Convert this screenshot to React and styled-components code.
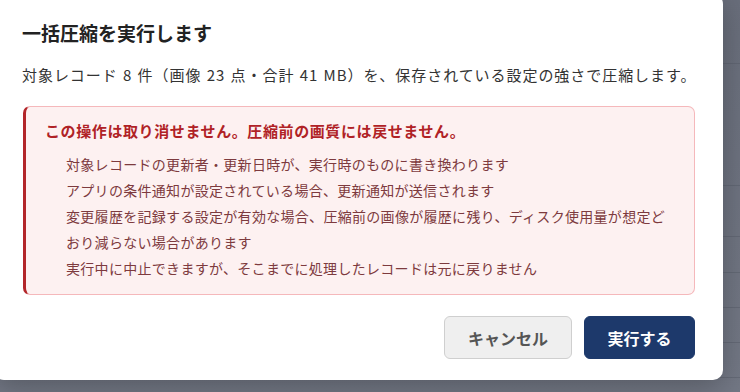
import styled, { createGlobalStyle } from "styled-components";

const GlobalStyle = createGlobalStyle`
  html, body {
    margin: 0;
    padding: 0;
    background: #6c717e;
  }
  body {
    font-family: "Noto Sans CJK JP", "Noto Sans", sans-serif;
  }
`;

const Page = styled.div`
  position: relative;
  width: 740px;
  height: 392px;
  overflow: hidden;
  background: linear-gradient(180deg, #696e7b 0%, #6e7380 50%, #737885 100%);
`;

const Backdrop = styled.div`
  display: flex;
  flex-direction: column;
`;

const BackRow = styled.div`
  height: ${({ h }) => h}px;
  border-bottom: 1px solid rgba(90, 95, 108, 0.55);
  flex-shrink: 0;
`;

const Dialog = styled.div`
  position: absolute;
  left: -6px;
  top: -6px;
  width: 729px;
  box-sizing: border-box;
  padding: 26px 28px 21px 28px;
  background: #ffffff;
  border-radius: 10px;
  box-shadow: 0 8px 30px rgba(0, 0, 0, 0.25);
`;

const Title = styled.h2`
  margin: 0;
  font-size: 19px;
  line-height: 26px;
  font-weight: 700;
  color: #222;
`;

const Description = styled.p`
  margin: 17px 0 0 0;
  font-size: 15px;
  line-height: 24px;
  letter-spacing: 0.95px;
  word-spacing: 1px;
  color: #333;
  white-space: nowrap;
`;

const Alert = styled.div`
  margin-top: 19px;
  margin-left: 1px;
  padding: 12px 16px 13px 19px;
  background: #fdf1f1;
  border: 1px solid #f5b8bb;
  border-left: 3px solid #b3262a;
  border-radius: 7px;
`;

const AlertHeading = styled.div`
  font-size: 15px;
  line-height: 24px;
  font-weight: 700;
  letter-spacing: 0.6px;
  color: #b02226;
`;

const AlertList = styled.ul`
  list-style: none;
  margin: 8px 0 0 0;
  padding: 0 0 0 21px;
`;

const AlertItem = styled.li`
  font-size: 14px;
  line-height: 26px;
  letter-spacing: 0.3px;
  color: #7d3a3e;
`;

const Footer = styled.div`
  display: flex;
  justify-content: flex-end;
  gap: 12px;
  margin-top: 21px;
`;

const Button = styled.button`
  height: 43px;
  box-sizing: border-box;
  border-radius: 6px;
  font-family: inherit;
  font-size: 16px;
  font-weight: 700;
  cursor: pointer;
  padding: 0;
  width: ${({ $w }) => $w}px;
  background: ${({ $primary }) => ($primary ? "#1d396b" : "#efefef")};
  color: ${({ $primary }) => ($primary ? "#ffffff" : "#555555")};
  border: 1px solid ${({ $primary }) => ($primary ? "#1d396b" : "#cfcfcf")};
`;

const rows = [63, 121, 50, 35, 34, 34, 34, 40];

const notes = [
  "対象レコードの更新者・更新日時が、実行時のものに書き換わります",
  "アプリの条件通知が設定されている場合、更新通知が送信されます",
  "変更履歴を記録する設定が有効な場合、圧縮前の画像が履歴に残り、ディスク使用量が想定どおり減らない場合があります",
  "実行中に中止できますが、そこまでに処理したレコードは元に戻りません",
];

const App = () => {
  return (
    <>
      <GlobalStyle />
      <Page>
        <Backdrop>
          {rows.map((h, i) => (
            <BackRow key={i} h={h} />
          ))}
        </Backdrop>
        <Dialog>
          <Title>一括圧縮を実行します</Title>
          <Description>
            対象レコード 8 件（画像 23 点・合計 41 MB）を、保存されている設定の強さで圧縮します。
          </Description>
          <Alert>
            <AlertHeading>
              この操作は取り消せません。圧縮前の画質には戻せません。
            </AlertHeading>
            <AlertList>
              {notes.map((n) => (
                <AlertItem key={n}>{n}</AlertItem>
              ))}
            </AlertList>
          </Alert>
          <Footer>
            <Button $w={128}>キャンセル</Button>
            <Button $w={111} $primary>
              実行する
            </Button>
          </Footer>
        </Dialog>
      </Page>
    </>
  );
};

export default App;
